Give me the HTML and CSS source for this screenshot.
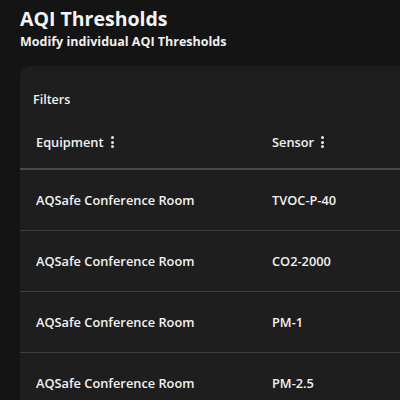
FILE: index.html
```html
<!DOCTYPE html>
<html>
<head>
<meta charset="utf-8">
<link rel="stylesheet" href="styles.css">
</head>
<body>
<div class="page">
  <h1 class="title">AQI Thresholds</h1>
  <p class="subtitle">Modify individual AQI Thresholds</p>
  <div class="card">
    <div class="filters">Filters</div>
    <div class="table">
      <div class="row head">
        <div class="cell c1">Equipment <span class="kebab"><i></i><i></i><i></i></span></div>
        <div class="cell c2">Sensor <span class="kebab"><i></i><i></i><i></i></span></div>
      </div>
      <div class="row">
        <div class="cell c1">AQSafe Conference Room</div>
        <div class="cell c2">TVOC-P-40</div>
      </div>
      <div class="row">
        <div class="cell c1">AQSafe Conference Room</div>
        <div class="cell c2">CO2-2000</div>
      </div>
      <div class="row">
        <div class="cell c1">AQSafe Conference Room</div>
        <div class="cell c2">PM-1</div>
      </div>
      <div class="row">
        <div class="cell c1">AQSafe Conference Room</div>
        <div class="cell c2">PM-2.5</div>
      </div>
    </div>
  </div>
</div>
</body>
</html>
```
FILE: styles.css
```css
html, body {
  margin: 0;
  padding: 0;
  background: #141414;
  height: 100%;
  overflow: hidden;
}
body {
  font-family: "Open Sans", "Liberation Sans", sans-serif;
  color: #f2f2f2;
}
.page {
  padding: 6px 0 0 20px;
  overflow: hidden;
  height: 394px;
}
.title {
  margin: 0;
  font-size: 19.5px;
  font-weight: 700;
  line-height: 26px;
  color: #f4f4f4;
}
.subtitle {
  margin: 2px 0 0;
  font-size: 12.5px;
  font-weight: 700;
  line-height: 16px;
  color: #f0f0f0;
}
.card {
  margin-top: 16px;
  background: #1e1e1e;
  border-radius: 12px 0 0 0;
  height: 400px;
}
.filters {
  padding: 25px 0 0 13px;
  font-size: 12.5px;
  font-weight: 600;
  line-height: 18px;
}
.row {
  display: flex;
  height: 60px;
  align-items: center;
  border-bottom: 1px solid #3d3d3d;
}
.row.head {
  margin-top: 7px;
  height: 52px;
  border-bottom: 2px solid #4a4a4a;
}
.cell {
  font-size: 12.8px;
  font-weight: 600;
  display: flex;
  align-items: center;
}
.c1 {
  width: 236px;
  padding-left: 16px;
}
.kebab {
  display: inline-flex;
  flex-direction: column;
  gap: 1.5px;
  margin-left: 7px;
}
.kebab i {
  display: block;
  width: 3px;
  height: 3px;
  border-radius: 50%;
  background: #e8e8e8;
}
```
